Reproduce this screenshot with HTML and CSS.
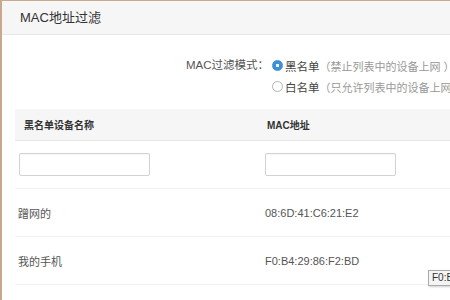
FILE: index.html
```html
<!DOCTYPE html>
<html lang="zh">
<head>
<meta charset="utf-8">
<link rel="stylesheet" href="styles.css">
</head>
<body>
<div class="frame">
  <div class="panel-head">MAC地址过滤</div>
  <div class="mode">
    <div class="mode-label">MAC过滤模式：</div>
    <div class="options">
      <div class="opt"><span class="radio on"></span><span class="opt-name">黑名单</span><span class="opt-desc">（禁止列表中的设备上网 ）</span></div>
      <div class="opt"><span class="radio"></span><span class="opt-name">白名单</span><span class="opt-desc">（只允许列表中的设备上网 ）</span></div>
    </div>
  </div>
  <div class="table">
    <div class="tr th"><div class="c1">黑名单设备名称</div><div class="c2">MAC地址</div></div>
    <div class="tr tin"><div class="c1"><input class="field" type="text"></div><div class="c2"><input class="field" type="text"></div></div>
    <div class="tr td"><div class="c1">蹭网的</div><div class="c2">08:6D:41:C6:21:E2</div></div>
    <div class="tr td"><div class="c1">我的手机</div><div class="c2">F0:B4:29:86:F2:BD</div></div>
  </div>
  <div class="tooltip">F0:B4:29:86:F2:BD</div>
</div>
</body>
</html>
```
FILE: styles.css
```css
html, body {
  margin: 0;
  padding: 0;
  background: #ffffff;
  overflow: hidden;
}
.frame {
  position: relative;
  width: 448px;
  height: 299px;
  border-top: 1px solid #c9a88c;
  border-left: 2px solid #c9a88c;
  font-family: "Liberation Sans", "Noto Sans CJK SC", sans-serif;
  color: #555;
  white-space: nowrap;
  overflow: hidden;
}
.panel-head {
  height: 33px;
  line-height: 33px;
  padding-left: 18px;
  background: #f6f6f6;
  border-bottom: 1px solid #e8e8e8;
  font-size: 13px;
  color: #333;
}
.mode {
  display: grid;
  grid-template-columns: 267px auto;
  padding-top: 20px;
  height: 54px;
}
.mode-label {
  text-align: right;
  font-size: 11.5px;
  line-height: 21px;
  color: #555;
}
.options {
  display: flex;
  flex-direction: column;
  padding-left: 3px;
}
.opt {
  display: flex;
  align-items: center;
  height: 21px;
  font-size: 11.5px;
}
.radio {
  box-sizing: border-box;
  width: 11px;
  height: 11px;
  border-radius: 50%;
  border: 1px solid #b5b5b5;
  background: #fff;
  margin-right: 2px;
  flex: none;
}
.radio.on {
  border: 1px solid #3d8fd8;
  background: radial-gradient(circle, #e8f2fb 0 1.5px, #3d8fd8 2px);
}
.opt-name {
  color: #444;
}
.opt-desc {
  color: #999;
  font-size: 11px;
}
.table {
  margin-left: 13px;
}
.tr {
  display: grid;
  grid-template-columns: 250px auto;
  align-items: center;
}
.th {
  height: 31px;
  background: #f6f6f6;
  border-bottom: 1px solid #e6e6e6;
  font-size: 10px;
  color: #333;
  font-weight: bold;
}
.th .c1 { padding-left: 9px; }
.th .c2 { padding-left: 2px; }
.tin {
  height: 47px;
  border-bottom: 1px solid #f1f1f1;
}
.tin .c1 { padding-left: 4px; }
.field {
  box-sizing: border-box;
  display: block;
  width: 131px;
  height: 23px;
  margin: 0;
  padding: 0 4px;
  border: 1px solid #d2d2d2;
  border-radius: 2px;
  background: #fff;
  box-shadow: inset 0 1px 1px rgba(0,0,0,0.04);
}
.td {
  height: 47px;
  border-bottom: 1px solid #f1f1f1;
  font-size: 11px;
  color: #555;
}
.td .c1 { padding-left: 3px; }
.tooltip {
  position: absolute;
  left: 426px;
  top: 269px;
  padding: 1px 3px;
  font-size: 10px;
  line-height: 12px;
  color: #333;
  background: #f4f4f4;
  border: 1px solid #aaa;
  box-shadow: 1px 1px 2px rgba(0,0,0,0.2);
}
```
